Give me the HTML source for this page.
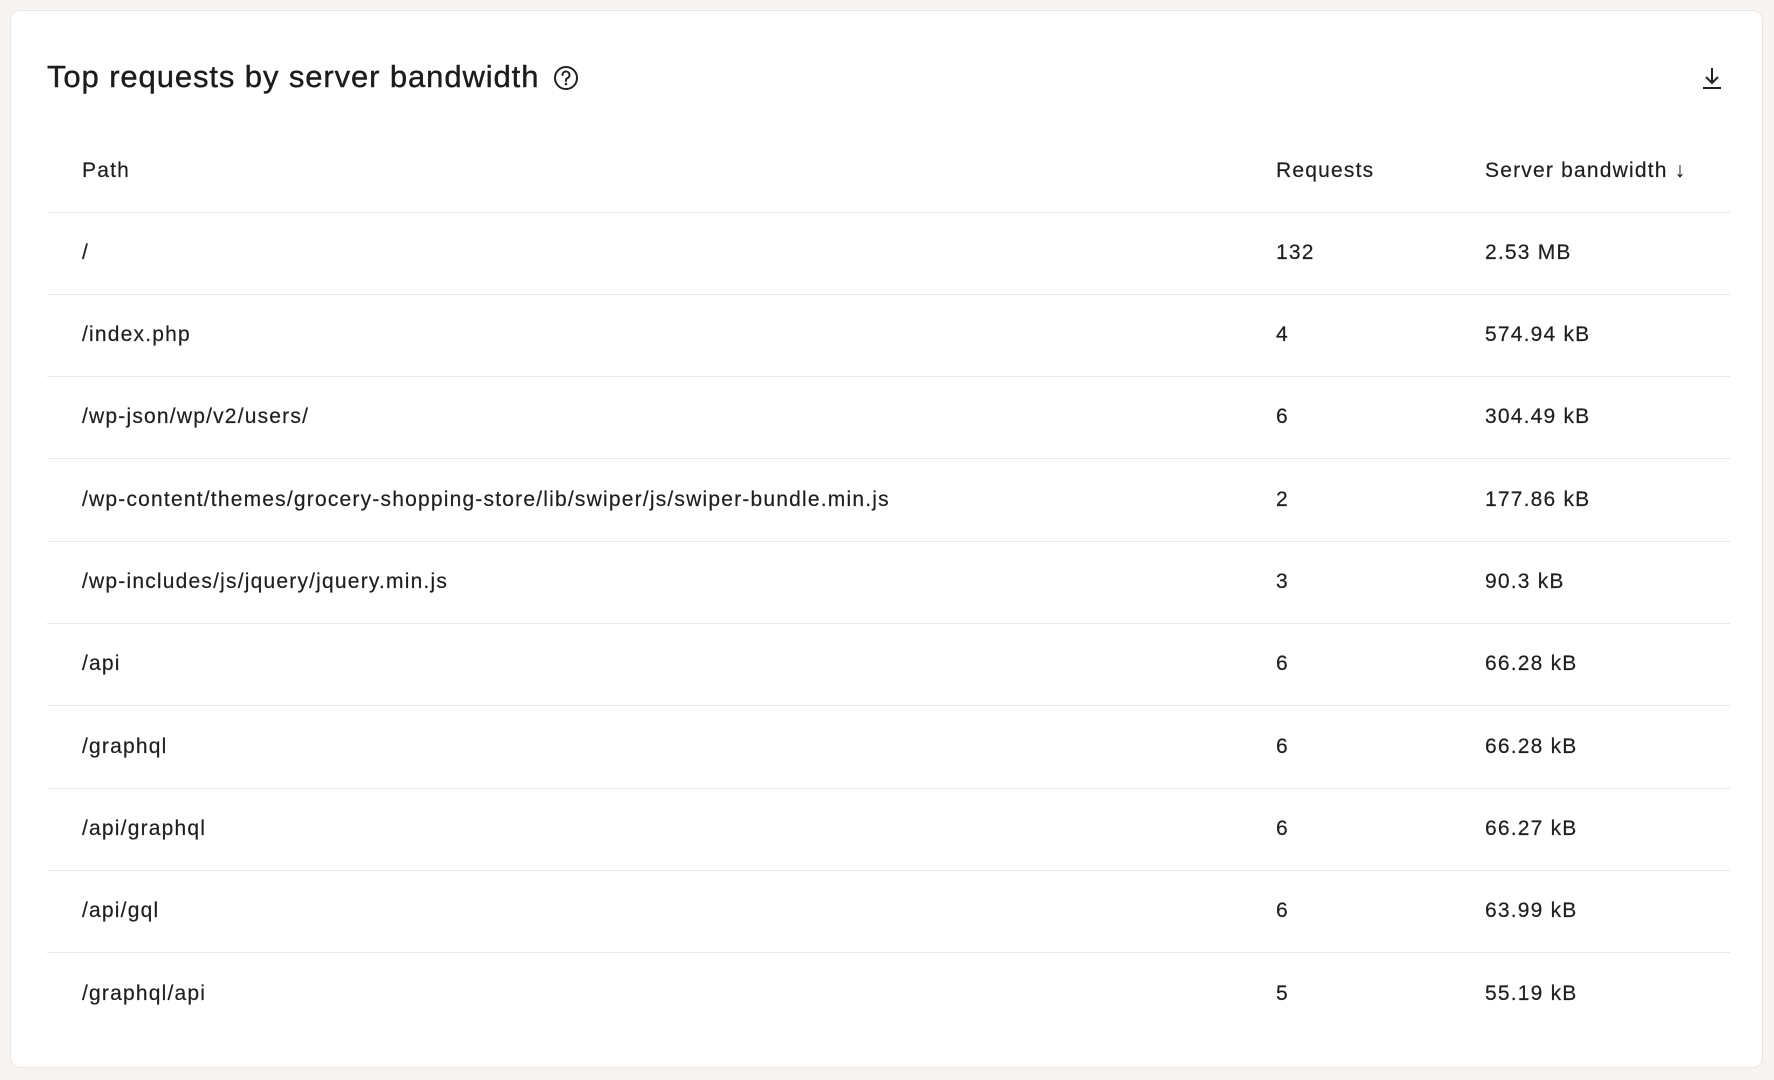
<!DOCTYPE html>
<html><head><meta charset="utf-8"><style>
html,body{margin:0;padding:0;width:1774px;height:1080px;background:#f8f4f1;overflow:hidden;font-family:"Liberation Sans",sans-serif;color:#1f1f1f}
.card{position:absolute;left:10px;top:10px;width:1753px;height:1058px;background:#fff;border:1px solid #ece6e2;border-radius:10px;box-sizing:border-box}
.title{position:absolute;left:36px;top:56px;font-size:31px;line-height:20px;letter-spacing:0.9px;color:#1c1c1c;-webkit-text-stroke:0.4px #1c1c1c}
.help{position:absolute;left:542px;top:54px}
.dl{position:absolute;left:1689px;top:54px}
.row{position:absolute;left:36px;width:1683px;height:82px;border-bottom:1px solid #ede7e3;font-size:21px;letter-spacing:1.2px}
.row span{position:absolute;top:50%;transform:translateY(-50%);-webkit-text-stroke:0.2px #1f1f1f}
.c1{left:35px}.c2{left:1229px}.c3{left:1438px}
</style></head><body>
<div class="card">
<div class="title">Top requests by server bandwidth</div>
<svg class="help" width="26" height="26" viewBox="0 0 26 26"><circle cx="13" cy="13" r="11" fill="none" stroke="#222" stroke-width="2"/><path d="M9.5 10a3.5 3.5 0 1 1 4.8 3.2c-.9.4-1.3 1-1.3 1.9v.9" fill="none" stroke="#222" stroke-width="2" stroke-linecap="round"/><circle cx="13" cy="19" r="1.3" fill="#222"/></svg>
<svg class="dl" width="24" height="26" viewBox="0 0 24 26"><path d="M12 3v15M6 12l6 6 6-6M3 23h18" fill="none" stroke="#222" stroke-width="2"/></svg>
<div class="row" style="top:119px;height:82px"><span class="c1">Path</span><span class="c2">Requests</span><span class="c3">Server bandwidth ↓</span></div>
<div class="row" style="top:201px"><span class="c1">/</span><span class="c2">132</span><span class="c3">2.53 MB</span></div>
<div class="row" style="top:283px"><span class="c1">/index.php</span><span class="c2">4</span><span class="c3">574.94 kB</span></div>
<div class="row" style="top:365px"><span class="c1">/wp-json/wp/v2/users/</span><span class="c2">6</span><span class="c3">304.49 kB</span></div>
<div class="row" style="top:448px"><span class="c1">/wp-content/themes/grocery-shopping-store/lib/swiper/js/swiper-bundle.min.js</span><span class="c2">2</span><span class="c3">177.86 kB</span></div>
<div class="row" style="top:530px"><span class="c1">/wp-includes/js/jquery/jquery.min.js</span><span class="c2">3</span><span class="c3">90.3 kB</span></div>
<div class="row" style="top:612px"><span class="c1">/api</span><span class="c2">6</span><span class="c3">66.28 kB</span></div>
<div class="row" style="top:695px"><span class="c1">/graphql</span><span class="c2">6</span><span class="c3">66.28 kB</span></div>
<div class="row" style="top:777px"><span class="c1">/api/graphql</span><span class="c2">6</span><span class="c3">66.27 kB</span></div>
<div class="row" style="top:859px"><span class="c1">/api/gql</span><span class="c2">6</span><span class="c3">63.99 kB</span></div>
<div class="row" style="top:942px;border-bottom:none"><span class="c1">/graphql/api</span><span class="c2">5</span><span class="c3">55.19 kB</span></div>
</div>
</body></html>
